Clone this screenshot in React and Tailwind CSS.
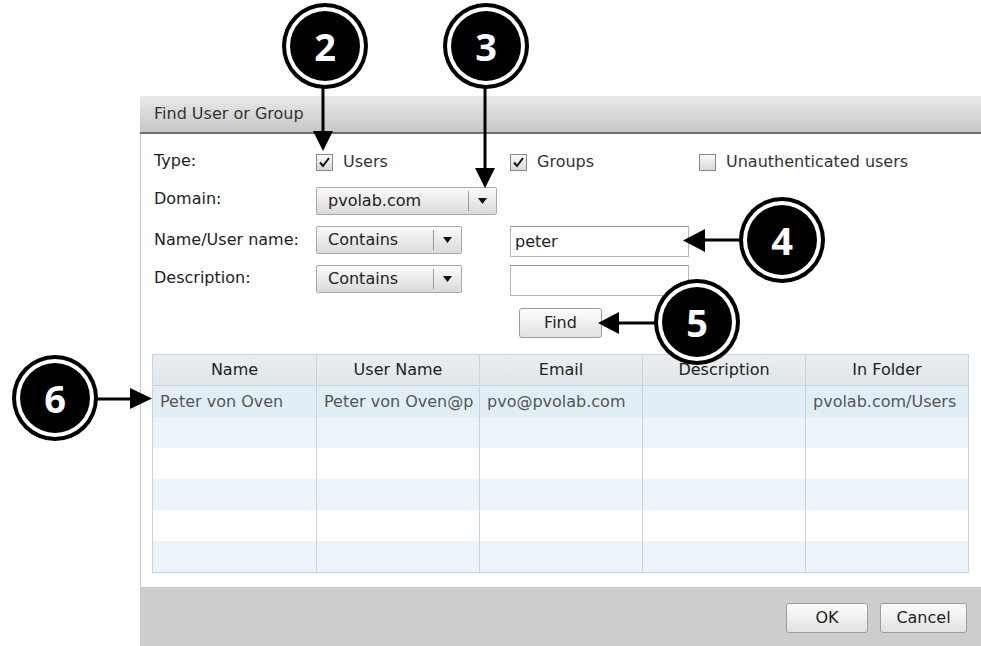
import React from 'react';

const font = { fontFamily: '"DejaVu Sans", Verdana, sans-serif' };

function Checkbox({ checked }) {
  return (
    <span className="w-[17px] h-[17px] border border-[#8a8a8a] bg-gradient-to-b from-[#fafafa] to-[#d9d9d9] flex items-center justify-center shrink-0">
      {checked && (
        <svg width="13" height="13" viewBox="0 0 13 13">
          <path d="M2 6.5 L5 10 L11 2" fill="none" stroke="#111" strokeWidth="2" />
        </svg>
      )}
    </span>
  );
}

function Select({ value, width }) {
  return (
    <div
      className={`${width} h-[28px] border border-[#a9a9a9] rounded-[2px] bg-gradient-to-b from-[#fbfbfb] to-[#dadada] flex items-center`}
    >
      <span className="flex-1 pl-[11px] text-[#222]">{value}</span>
      <span className="w-px h-[20px] bg-[#9a9a9a]" />
      <span className="w-[27px] flex items-center justify-center">
        <svg width="9" height="6" viewBox="0 0 9 6">
          <path d="M0 0 H9 L4.5 6 Z" fill="#111" />
        </svg>
      </span>
    </div>
  );
}

function TextBox({ value }) {
  return (
    <div className="w-[179px] h-[31px] border border-[#b8b8b8] border-t-[#9c9c9c] bg-white flex items-center pl-[4px] text-[#222]">
      {value}
    </div>
  );
}

function Button({ children, className }) {
  return (
    <button
      className={`h-[30px] border border-[#9d9d9d] rounded-[3px] bg-gradient-to-b from-[#fdfdfd] to-[#e2e2e2] text-[#222] flex items-center justify-center ${className}`}
    >
      {children}
    </button>
  );
}

function Badge({ n, className }) {
  return (
    <div className={`absolute w-[86px] h-[86px] rounded-full bg-black p-[4px] ${className}`}>
      <div className="w-full h-full rounded-full bg-white p-[4px]">
        <div
          className="w-full h-full rounded-full bg-black text-white flex items-center justify-center text-[38px] font-bold leading-none"
          style={{ fontFamily: '"Open Sans", "DejaVu Sans", sans-serif' }}
        >
          {n}
        </div>
      </div>
    </div>
  );
}

const columns = ['Name', 'User Name', 'Email', 'Description', 'In Folder'];
const rows = [
  ['Peter von Oven', 'Peter von Oven@p', 'pvo@pvolab.com', '', 'pvolab.com/Users'],
  ['', '', '', '', ''],
  ['', '', '', '', ''],
  ['', '', '', '', ''],
  ['', '', '', '', ''],
  ['', '', '', '', ''],
];
const rowBg = ['bg-[#e2eef6]', 'bg-[#edf4f9]', 'bg-white', 'bg-[#edf4f9]', 'bg-white', 'bg-[#edf4f9]'];

export default function App() {
  return (
    <div className="relative w-[981px] h-[646px] bg-white overflow-hidden text-[16px]" style={font}>
      {/* dialog */}
      <div className="ml-[140px] pt-[96px] w-[841px] flex flex-col">
        <div className="h-[38px] bg-gradient-to-b from-[#e9e9e9] to-[#c7c7c7] border-b-2 border-[#707070] flex items-center pl-[14px] text-[#333]">
          Find User or Group
        </div>

        <div className="h-[453px] border-l border-[#c9c9c9] pl-[11px] flex flex-col">
          {/* Type */}
          <div className="mt-[16px] h-[24px] flex items-center text-[#222]">
            <span className="w-[164px] pl-[2px] -mt-[3px]">Type:</span>
            <label className="w-[194px] flex items-center gap-[10px]">
              <Checkbox checked />
              <span className="text-[#333]">Users</span>
            </label>
            <label className="w-[189px] flex items-center gap-[10px]">
              <Checkbox checked />
              <span className="text-[#333]">Groups</span>
            </label>
            <label className="flex items-center gap-[10px]">
              <Checkbox />
              <span className="text-[#333]">Unauthenticated users</span>
            </label>
          </div>

          {/* Domain */}
          <div className="mt-[13px] h-[28px] flex items-center text-[#222]">
            <span className="w-[164px] pl-[2px] -mt-[4px]">Domain:</span>
            <Select value="pvolab.com" width="w-[181px]" />
          </div>

          {/* Name */}
          <div className="mt-[11px] h-[31px] flex items-start text-[#222]">
            <span className="w-[164px] pl-[2px] mt-[2px]">Name/User name:</span>
            <div className="w-[194px]">
              <Select value="Contains" width="w-[146px]" />
            </div>
            <TextBox value="peter" />
          </div>

          {/* Description */}
          <div className="mt-[8px] h-[31px] flex items-start text-[#222]">
            <span className="w-[164px] pl-[2px] mt-[1px]">Description:</span>
            <div className="w-[194px]">
              <Select value="Contains" width="w-[146px]" />
            </div>
            <TextBox value="" />
          </div>

          {/* Find */}
          <div className="mt-[12px] h-[30px] flex">
            <Button className="ml-[367px] w-[83px]">Find</Button>
          </div>

          {/* Results table */}
          <div className="mt-[16px] w-[817px] border border-[#c9d5dd]">
            <div className="grid grid-cols-[164px_163px_163px_163px_1fr] h-[31px] bg-gradient-to-b from-[#eaeef0] to-[#e0e6e9] border-b border-[#c9d5dd]">
              {columns.map((c, i) => (
                <div
                  key={c}
                  className={`flex items-center justify-center text-[#222] ${i < 4 ? 'border-r border-[#c9d5dd]' : ''}`}
                >
                  {c}
                </div>
              ))}
            </div>
            {rows.map((r, ri) => (
              <div key={ri} className={`grid grid-cols-[164px_163px_163px_163px_1fr] h-[31px] ${rowBg[ri]}`}>
                {r.map((cell, ci) => (
                  <div
                    key={ci}
                    className={`flex items-center pl-[7px] text-[#555] whitespace-nowrap overflow-hidden ${ci < 4 ? 'border-r border-[#c9d5dd]' : ''}`}
                  >
                    {cell}
                  </div>
                ))}
              </div>
            ))}
          </div>
        </div>

        {/* footer */}
        <div className="h-[59px] bg-[#cdcdce] border-l border-[#c9c9c9] flex items-center justify-end gap-[12px] pr-[14px] pt-[2px]">
          <Button className="w-[82px]">OK</Button>
          <Button className="w-[87px]">Cancel</Button>
        </div>
      </div>

      {/* annotations */}
      <svg className="absolute inset-0 pointer-events-none" width="981" height="646">
        <g stroke="#000" strokeWidth="3">
          <line x1="323" y1="88" x2="323" y2="134" />
          <line x1="485" y1="88" x2="485" y2="170" />
          <line x1="740" y1="240" x2="702" y2="240" />
          <line x1="655" y1="323" x2="616" y2="323" />
          <line x1="97" y1="399" x2="132" y2="399" />
        </g>
        <g fill="#000">
          <polygon points="313,131 333,131 323,151" />
          <polygon points="475,168 495,168 485,188" />
          <polygon points="705,229 705,252 683,240.5" />
          <polygon points="619,312 619,334 598,323" />
          <polygon points="130,388 130,409 152,398.5" />
        </g>
      </svg>
      <Badge n="2" className="left-[282px] top-[3px]" />
      <Badge n="3" className="left-[443px] top-[3px]" />
      <Badge n="4" className="left-[739px] top-[197px]" />
      <Badge n="5" className="left-[654px] top-[279px]" />
      <Badge n="6" className="left-[12px] top-[355px]" />
    </div>
  );
}
